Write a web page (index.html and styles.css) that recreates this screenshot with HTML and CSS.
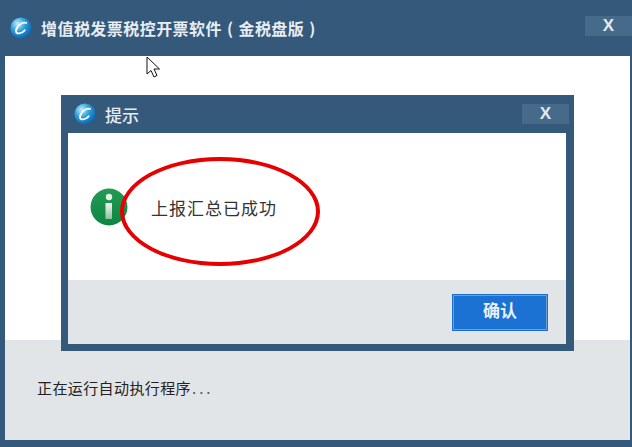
FILE: index.html
```html
<!DOCTYPE html>
<html lang="zh-CN">
<head>
    <meta charset="UTF-8">
    <title>增值税发票税控开票软件（金税盘版）</title>
    <link rel="stylesheet" href="styles.css">
</head>
<body>
    <div class="window">
        <div class="titlebar">
            <svg class="logo" viewBox="0 0 24 24">
                <use href="#logo-mark"></use>
            </svg>
            <span class="title">增值税发票税控开票软件<span class="paren">(</span>金税盘版<span class="paren">)</span></span>
            <span class="close">X</span>
        </div>
        <div class="content"></div>
        <div class="status">正在运行自动执行程序<span class="dots">...</span></div>
    </div>

    <!-- dialog sits over the main window -->
    <div class="dialog">
        <div class="dialog-titlebar">
            <svg class="logo" viewBox="0 0 24 24">
                <use href="#logo-mark"></use>
            </svg>
            <span class="dialog-title">提示</span>
            <span class="close dialog-close">X</span>
        </div>
        <div class="dialog-body">
            <svg class="info-icon" viewBox="0 0 38 38">
                <defs>
                    <linearGradient id="info-green" x1="0" y1="0" x2="0" y2="1">
                        <stop offset="0" stop-color="#259a55"></stop>
                        <stop offset="1" stop-color="#0c8640"></stop>
                    </linearGradient>
                    <linearGradient id="info-bar" x1="0" y1="0" x2="0" y2="1">
                        <stop offset="0" stop-color="#f4f8f2"></stop>
                        <stop offset="1" stop-color="#8fc09c"></stop>
                    </linearGradient>
                </defs>
                <circle cx="19" cy="19" r="18.5" fill="url(#info-green)"></circle>
                <circle cx="19" cy="9" r="3.2" fill="#e6f1e6"></circle>
                <rect x="15.5" y="15" width="6.5" height="16" fill="url(#info-bar)"></rect>
            </svg>
            <span class="message">上报汇总已成功</span>
        </div>
        <div class="dialog-footer">
            <button class="confirm">确认</button>
        </div>
    </div>

    <div class="ring"></div>

    <svg class="cursor" viewBox="0 0 16 24">
        <path d="M1 1 L1 18 L5 14.5 L8 21 L11 19.5 L8 13 L13.5 13 Z" fill="#fff" stroke="#111" stroke-width="1"></path>
    </svg>

    <svg class="sprites" width="0" height="0">
        <defs>
            <radialGradient id="logo-fill" cx="0.35" cy="0.3" r="0.8">
                <stop offset="0" stop-color="#c8eefb"></stop>
                <stop offset="0.45" stop-color="#2a9fdc"></stop>
                <stop offset="1" stop-color="#0a5aa2"></stop>
            </radialGradient>
            <g id="logo-mark">
                <circle cx="12" cy="12" r="11.5" fill="url(#logo-fill)"></circle>
                <path d="M17.5 6.5 C13 4.5 6.5 11 6.5 15.5 C6.5 19 12.5 18.5 16 14.5" fill="none" stroke="#fff" stroke-width="2" stroke-linecap="round"></path>
            </g>
        </defs>
    </svg>
</body>
</html>
```

FILE: styles.css
```css
/* Main window and dialog */
body {
    margin: 0;
    width: 632px;
    height: 447px;
    overflow: hidden;
    position: relative;
    font-family: "Noto Sans CJK SC", "Liberation Sans", sans-serif;
    background-color: #34597a;
}
.window {
    display: flex;
    flex-direction: column;
    height: 447px;
    box-sizing: border-box;
    padding: 0 2px 7px 5px;
    background-color: #34597a;
}
.titlebar {
    display: flex;
    align-items: center;
    height: 56px;
    margin-left: -5px;
    margin-right: -2px;
    padding-left: 10px;
    box-sizing: border-box;
    flex-shrink: 0;
}
.logo {
    width: 22px;
    height: 22px;
    flex-shrink: 0;
}
.title {
    margin-left: 9px;
    color: #e8edf1;
    font-size: 16px;
    font-weight: 700;
    letter-spacing: 0.45px;
    white-space: nowrap;
    flex: 1;
}
.paren {
    margin: 0 5px;
}
.close {
    width: 47px;
    height: 20px;
    line-height: 19px;
    margin-top: -4px;
    text-align: center;
    color: #e4e8ea;
    font-family: "Liberation Sans", sans-serif;
    font-size: 17px;
    font-weight: 700;
    background-color: #466a89;
}
.content {
    flex: 1;
    background-color: #fff;
}
.status {
    height: 100px;
    box-sizing: border-box;
    padding: 35px 0 0 32px;
    background-color: #e2e5e8;
    color: #222;
    font-size: 15px;
    line-height: 26px;
    letter-spacing: 0.4px;
}
.dots {
    margin-left: 1px;
    letter-spacing: 3px;
    color: #555;
}
.dialog {
    position: absolute;
    left: 61px;
    top: 95px;
    width: 513px;
    height: 256px;
    box-sizing: border-box;
    padding: 0 8px 7px 7px;
    display: flex;
    flex-direction: column;
    background-color: #34597a;
}
.dialog-titlebar {
    display: flex;
    align-items: center;
    height: 38px;
    padding-left: 6px;
    flex-shrink: 0;
}
.dialog-title {
    margin-left: 9px;
    color: #e8edf1;
    font-size: 17px;
    font-weight: 500;
    flex: 1;
}
.dialog-close {
    margin-top: -1px;
    margin-right: -3px;
}
.dialog-body {
    flex: 1;
    display: flex;
    align-items: center;
    background-color: #fff;
    padding: 0 0 0 22px;
}
.info-icon {
    width: 38px;
    height: 38px;
    flex-shrink: 0;
}
.message {
    margin-left: 23px;
    padding-top: 2px;
    color: #333;
    font-size: 17px;
    letter-spacing: 1px;
}
.dialog-footer {
    height: 64px;
    display: flex;
    align-items: center;
    justify-content: flex-end;
    padding-right: 18px;
    background-color: #e2e5e8;
}
.confirm {
    width: 96px;
    height: 37px;
    padding: 0 0 5px;
    border: 1px solid #1c6fc9;
    outline: 1px solid #6f9fce;
    outline-offset: -2px;
    background-color: #1c72d2;
    color: #e8f0f6;
    font-family: inherit;
    font-size: 17px;
    font-weight: 700;
}
.ring {
    position: absolute;
    left: 120px;
    top: 157px;
    width: 200px;
    height: 109px;
    box-sizing: border-box;
    border: 4.5px solid #e60000;
    border-radius: 50%;
}
.cursor {
    position: absolute;
    left: 146px;
    top: 56px;
    width: 16px;
    height: 24px;
}
.sprites {
    position: absolute;
}
```
